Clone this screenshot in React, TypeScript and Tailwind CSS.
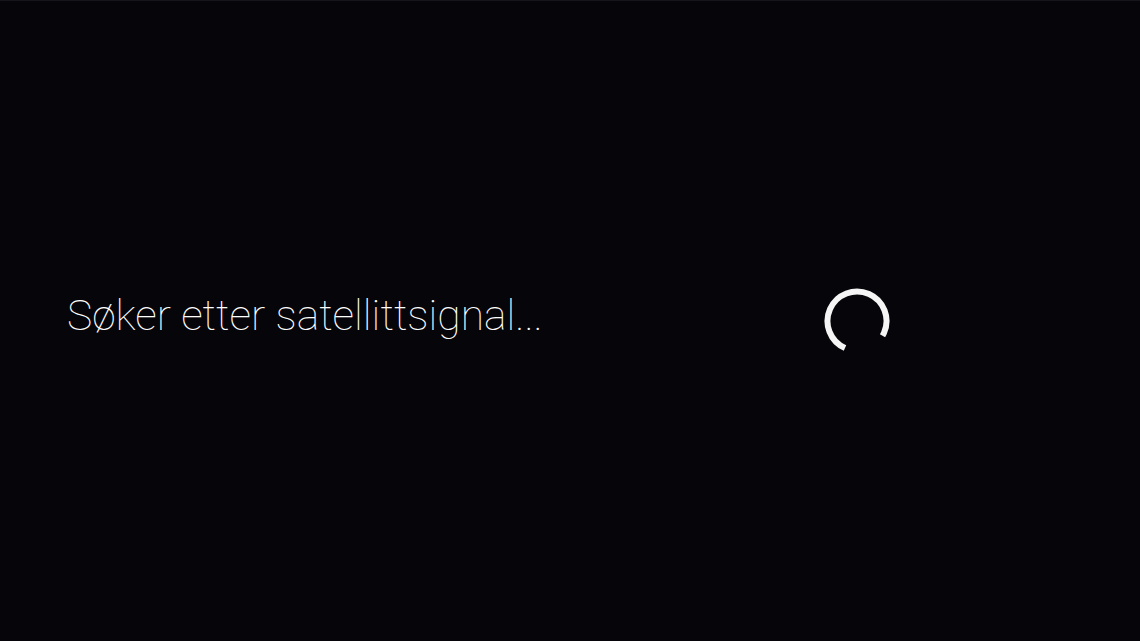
export default function App() {
  return (
    <div className="h-[641px] w-full overflow-hidden border-t border-[#16151b] bg-[#060509] antialiased">
      <div className="flex h-[640px] items-center pl-[67px]">
        <div className="w-[755px] shrink-0">
          <p
            className="mb-[12px] text-[42.6px] font-thin leading-none text-white"
            style={{ fontFamily: 'Roboto, "Noto Sans", sans-serif' }}
          >
            Søker etter satellittsignal...
          </p>
        </div>
        <svg width="70" height="70" viewBox="0 0 70 70" className="shrink-0">
          <circle
            cx="35"
            cy="35"
            r="29.5"
            fill="none"
            stroke="#f5f5f5"
            strokeWidth="6"
            strokeDasharray="142 185.4"
            transform="rotate(114 35 35)"
          />
        </svg>
      </div>
    </div>
  )
}
